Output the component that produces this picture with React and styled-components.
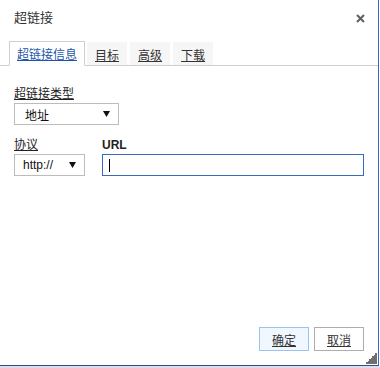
import React from 'react'
import styled, { createGlobalStyle } from 'styled-components'

const GlobalStyle = createGlobalStyle`
  html, body {
    margin: 0;
    padding: 0;
    background: #ffffff;
  }
  body {
    font-family: "Liberation Sans", "Noto Sans CJK SC", sans-serif;
    font-size: 12px;
    color: #333;
  }
`

const TABS = ['超链接信息', '目标', '高级', '下载']

function CloseIcon() {
  return (
    <svg width="9" height="9" viewBox="0 0 9 9">
      <path d="M1 1 L8 8 M8 1 L1 8" stroke="#5f5f5f" strokeWidth="2" />
    </svg>
  )
}

function Arrow() {
  return (
    <svg width="7" height="6" viewBox="0 0 7 6">
      <path d="M0 0 H7 L3.5 6 Z" fill="#111" />
    </svg>
  )
}

function App() {
  return (
    <Page>
      <GlobalStyle />
      <Dialog>
        <TitleBar>
          <Title>超链接</Title>
          <CloseBtn>
            <CloseIcon />
          </CloseBtn>
        </TitleBar>
        <TabBar>
          {TABS.map((tab, i) => (
            <Tab key={tab} active={i === 0}>
              {tab}
            </Tab>
          ))}
        </TabBar>
        <Content>
          <Field>
            <Label underline>超链接类型</Label>
            <Select width={105} pad={10}>
              <span>地址</span>
              <Arrow />
            </Select>
          </Field>
          <Row>
            <Field>
              <Label underline>协议</Label>
              <Select width={71} pad={8}>
                <span>http://</span>
                <Arrow />
              </Select>
            </Field>
            <Grow>
              <Label bold>URL</Label>
              <Input>
                <Caret />
              </Input>
            </Grow>
          </Row>
        </Content>
        <Footer>
          <Button primary>确定</Button>
          <Button>取消</Button>
        </Footer>
        <Grip />
      </Dialog>
      <Shade />
    </Page>
  )
}

const Page = styled.div`
  width: 380px;
  height: 368px;
  display: flex;
  flex-direction: column;
`

const Dialog = styled.div`
  position: relative;
  width: 378px;
  height: 365px;
  background: #fff;
  border-right: 1px solid #3767b4;
  border-bottom: 1px solid #2f4f8a;
  display: flex;
  flex-direction: column;
`

const TitleBar = styled.div`
  height: 40px;
  padding: 10px 14px 0 14px;
  box-sizing: border-box;
  display: flex;
  justify-content: space-between;
  align-items: flex-start;
`

const Title = styled.div`
  font-size: 13px;
  line-height: 16px;
  color: #333;
`

const CloseBtn = styled.div`
  width: 16px;
  height: 16px;
  margin-right: -4px;
  display: flex;
  align-items: center;
  justify-content: center;
`

const TabBar = styled.div`
  height: 25px;
  padding-left: 9px;
  border-bottom: 1px solid #cfcfcf;
  display: flex;
  align-items: flex-end;
  gap: 3px;
`

const Tab = styled.div`
  height: ${({ active }) => (active ? '25px' : '24px')};
  padding: 0 ${({ active }) => (active ? '7px' : '8px')};
  box-sizing: border-box;
  display: flex;
  align-items: center;
  padding-top: ${({ active }) => (active ? '0' : '1px')};
  margin-right: ${({ active }) => (active ? '-1px' : '0')};
  margin-bottom: -1px;
  font-size: 12px;
  text-decoration: underline;
  color: ${({ active }) => (active ? '#1d56a8' : '#333')};
  background: ${({ active }) => (active ? '#fff' : '#f6f6f6')};
  border: ${({ active }) => (active ? '1px solid #cfcfcf' : 'none')};
  border-bottom: ${({ active }) => (active ? '1px solid #fff' : '1px solid #cfcfcf')};
`

const Content = styled.div`
  flex: 1;
  padding: 20px 14px 0 14px;
  display: flex;
  flex-direction: column;
  gap: 12px;
`

const Field = styled.div`
  display: flex;
  flex-direction: column;
`

const Grow = styled(Field)`
  flex: 1;
`

const Row = styled.div`
  display: flex;
  gap: 17px;
`

const Label = styled.div`
  font-size: 12px;
  line-height: 16px;
  color: #222;
  font-weight: ${({ bold }) => (bold ? 'bold' : 'normal')};
  text-decoration: ${({ underline }) => (underline ? 'underline' : 'none')};
`

const Select = styled.div`
  width: ${({ width }) => width}px;
  height: 22px;
  box-sizing: border-box;
  border: 1px solid #bcbcbc;
  padding: 0 8px 0 ${({ pad }) => pad}px;
  display: flex;
  align-items: center;
  justify-content: space-between;
  font-size: 12px;
  color: #111;
  margin-top: 1px;
`

const Input = styled.div`
  height: 22px;
  box-sizing: border-box;
  border: 1px solid #3a6ab6;
  margin-top: 1px;
  display: flex;
  align-items: center;
  padding-left: 6px;
  width: 262px;
`

const Caret = styled.span`
  width: 1px;
  height: 13px;
  background: #000;
`

const Footer = styled.div`
  display: flex;
  justify-content: flex-end;
  gap: 5px;
  padding: 0 14px 14px 0;
`

const Button = styled.div`
  width: 50px;
  height: 24px;
  box-sizing: border-box;
  display: flex;
  align-items: center;
  justify-content: center;
  font-size: 12px;
  color: #333;
  text-decoration: underline;
  border: 1px solid ${({ primary }) => (primary ? '#9cc2ee' : '#adadad')};
  background: ${({ primary }) => (primary ? '#f1f7ff' : '#fff')};
`

const Grip = styled.div`
  position: absolute;
  right: 1px;
  bottom: 1px;
  width: 12px;
  height: 12px;
  background: linear-gradient(135deg, transparent 50%, #6f6f6f 50%);
`

const Shade = styled.div`
  flex: 1;
  background: #d9e0ea;
`

export default App
